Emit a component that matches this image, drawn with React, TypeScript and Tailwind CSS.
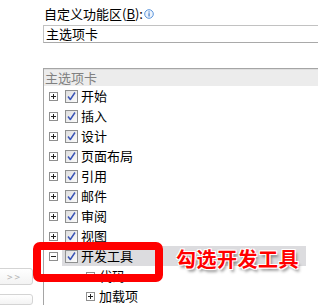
import React from 'react';

const FONT = { fontFamily: '"Noto Sans CJK SC", "Noto Sans", sans-serif' };

const TABS = ['开始', '插入', '设计', '页面布局', '引用', '邮件', '审阅', '视图'];

function ExpandBox({ open = false }: { open?: boolean }) {
    return (
        <div className="w-[9px] h-[9px] border border-[#8f8f8f] bg-white flex items-center justify-center shrink-0">
            <svg width="7" height="7" viewBox="0 0 7 7">
                <path d="M1 3.5H6" stroke="#222" strokeWidth="1" />
                {!open && <path d="M3.5 1V6" stroke="#222" strokeWidth="1" />}
            </svg>
        </div>
    );
}

function CheckBox() {
    return (
        <div className="w-[13px] h-[13px] border border-[#8e8f8f] bg-gradient-to-br from-[#dedede] to-[#fcfcfc] flex items-center justify-center shrink-0">
            <svg width="11" height="11" viewBox="0 0 11 11">
                <path d="M2 5.5L4.3 8.5L9 1.5" fill="none" stroke="#3b55b5" strokeWidth="1.5" strokeLinejoin="round" />
            </svg>
        </div>
    );
}

export default function App() {
    return (
        <div className="relative w-[318px] h-[305px] overflow-hidden bg-white text-[13px] text-black flex" style={FONT}>
            {/* left: move buttons, cut off */}
            <div className="w-[43px] shrink-0 flex flex-col pt-[268px] gap-[9px]">
                <div className="w-[41px] h-[25px] -ml-[8px] rounded-[3px] border border-[#d4d4d4] bg-gradient-to-b from-white to-[#f3f3f3] flex items-center justify-end pr-[10px] text-[10px] text-[#b4b4b4] tracking-[2px]">
                    &gt;&gt;
                </div>
                <div className="w-[41px] h-[25px] -ml-[8px] rounded-[3px] border border-[#d4d4d4] bg-gradient-to-b from-white to-[#f3f3f3]" />
            </div>

            {/* right: customize ribbon */}
            <div className="flex-1 flex flex-col">
                <div className="h-[16px] mt-[6px] pl-[1px] flex items-center leading-[16px]">
                    <span>自定义功能区(<span className="underline">B</span>):</span>
                    <svg width="10" height="10" viewBox="0 0 10 10" className="ml-[1px]">
                        <circle cx="5" cy="5" r="4.3" fill="#eef4fc" stroke="#4a8ad8" strokeWidth="0.9" />
                        <rect x="4.5" y="4.2" width="1.1" height="3.3" fill="#2f6fc6" />
                        <rect x="4.5" y="2.4" width="1.1" height="1.1" fill="#2f6fc6" />
                    </svg>
                </div>

                <div className="mt-[3px] h-[21px] border border-[#c2c2c2] border-b-[#a9a9a9] border-r-0 pl-[2px] flex items-center leading-[16px]">
                    主选项卡
                </div>

                <div className="mt-[25px] flex-1 border-l border-t border-[#a5a5a5] flex flex-col">
                    <div className="h-[17px] bg-[#ececec] border-t border-[#dedede] pl-[1px] flex items-center text-[#808080] leading-[16px]">
                        主选项卡
                    </div>
                    {TABS.map((t) => (
                        <div key={t} className="h-[20px] flex items-center leading-[16px]">
                            <div className="ml-[5px]"><ExpandBox /></div>
                            <div className="ml-[7px]"><CheckBox /></div>
                            <span className="ml-[3px]">{t}</span>
                        </div>
                    ))}
                    <div className="h-[20px] flex items-center leading-[16px]">
                        <div className="ml-[5px]"><ExpandBox open /></div>
                        <div className="ml-[4px] w-[244px] h-[20px] bg-[#dcdcdf] flex items-center pl-[3px]">
                            <CheckBox />
                            <span className="ml-[3px]">开发工具</span>
                        </div>
                    </div>
                    {['代码', '加载项'].map((t) => (
                        <div key={t} className="h-[20px] flex items-center leading-[16px]">
                            <div className="ml-[42px]"><ExpandBox /></div>
                            <span className="ml-[4px]">{t}</span>
                        </div>
                    ))}
                </div>
            </div>

            {/* annotation */}
            <div className="absolute left-[33px] top-[242px] w-[130px] h-[40px] border-[8px] border-[#ff0000] rounded-[7px]" />
            <div
                className="absolute left-[176px] top-[246px] text-[20px] leading-[26px] font-bold text-[#ff0000] tracking-[0.5px]"
                style={{ textShadow: '-1px -1px 0 #fff, 1px -1px 0 #fff, -1px 1px 0 #fff, 1px 1px 0 #fff, 2px 3px 3px rgba(0,0,0,0.45)' }}
            >
                勾选开发工具
            </div>
        </div>
    );
}
